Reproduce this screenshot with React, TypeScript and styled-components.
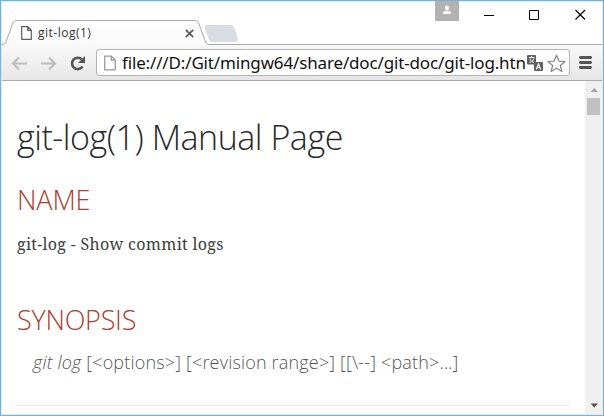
import React from 'react';
import styled, { createGlobalStyle } from 'styled-components';

const GlobalStyle = createGlobalStyle`
  * { box-sizing: border-box; }
  body { margin: 0; background: #fff; overflow: hidden; }
  svg { display: block; flex: none; }
`;

const Window = styled.div`
  width: 604px;
  height: 416px;
  display: flex;
  flex-direction: column;
  background: #fff;
  border: 1px solid #7ab0d4;
  box-shadow: inset 0 0 0 1px #d5eefb;
  overflow: hidden;
`;

const TitleBar = styled.header`
  height: 44px;
  flex: none;
  display: flex;
  align-items: flex-start;
  justify-content: space-between;
  position: relative;
`;

const TabOutline = styled.svg`
  position: absolute;
  left: 0;
  top: 0;
`;

const TabContent = styled.div`
  position: relative;
  display: flex;
  align-items: center;
  width: 193px;
  height: 24px;
  margin-top: 20px;
  padding-left: 20px;
`;

const TabTitle = styled.span`
  flex: 1;
  margin-left: 6px;
  font: 12px/16px "Open Sans", sans-serif;
  letter-spacing: 0.5px;
  color: #333;
`;

const Controls = styled.div`
  position: relative;
  display: flex;
  margin-right: 17px;
`;

const Profile = styled.div`
  width: 24px;
  height: 20px;
  margin-right: 25px;
  background: #b2b2b2;
`;

const ControlIcon = styled.div<{ $gap: number }>`
  width: 11px;
  height: 28px;
  padding-top: 8px;
  margin-right: ${(p) => p.$gap}px;
`;

const Toolbar = styled.nav`
  height: 36px;
  flex: none;
  display: flex;
  align-items: center;
  margin: 0 1px;
  padding: 0 8px 0 9px;
  background: linear-gradient(#f9f9f9, #e6e6e6);
  border-bottom: 1px solid #aaa;
`;

const NavIcons = styled.div`
  display: flex;
  width: 85px;
`;

const AddressBar = styled.div`
  display: flex;
  align-items: center;
  width: 474px;
  height: 27px;
  padding-left: 7px;
  margin-right: 9px;
  background: #fff;
  border: 1px solid #b4b4b4;
  border-radius: 3px;
`;

const Url = styled.span`
  width: 404px;
  margin-left: 6px;
  overflow: hidden;
  white-space: nowrap;
  font: 17px/24px "Noto Sans", sans-serif;
  letter-spacing: -0.15px;
  color: #111;
`;

const Viewport = styled.div`
  flex: 1;
  min-height: 0;
  display: flex;
  margin: 0 1px 1px;
`;

const Page = styled.main`
  flex: 1;
  padding: 0 15px;
  font-family: "Open Sans", sans-serif;
  font-weight: 300;
`;

const Title = styled.h1`
  margin: 33px 0 0;
  font-size: 34px;
  line-height: 46px;
  font-weight: 300;
  letter-spacing: -0.46px;
  color: #292929;
  white-space: nowrap;
`;

const Heading = styled.h2<{ $top: number; $tracking: number }>`
  margin: ${(p) => p.$top}px 0 0;
  font-size: 27px;
  line-height: 36px;
  font-weight: 300;
  letter-spacing: ${(p) => p.$tracking}px;
  color: #a9402f;
`;

const Summary = styled.p`
  margin: 13px 0 0;
  font: 400 16px/26px "Noto Serif", "Droid Serif", "DejaVu Serif Condensed", "DejaVu Serif", serif;
  font-stretch: condensed;
  letter-spacing: 0.31px;
  color: #39403d;
  white-space: nowrap;
`;

const Synopsis = styled.div`
  height: 58px;
  margin-top: 10px;
  padding: 1px 0 0 16px;
  border-bottom: 1px solid #e9e9e9;
  font-size: 18px;
  line-height: 26px;
  letter-spacing: 0.18px;
  color: #555;
  white-space: nowrap;
`;

const ScrollBar = styled.aside`
  display: flex;
  flex-direction: column;
  align-items: center;
  width: 17px;
  background: #f0f0f0;
`;

const Thumb = styled.div`
  width: 13px;
  height: 17px;
  margin: 0 0 auto;
  background: #c1c1c1;
`;

const PageIcon = ({ w, h, color }: { w: number; h: number; color: string }) => (
  <svg width={w} height={h} viewBox="0 0 11 14" fill="#fff" stroke={color} strokeWidth="1.2">
    <path d="M.7.7h6l3.6 3.6v9H.7zM6.7.7v3.6h3.6" />
  </svg>
);

export default function App() {
  return (
    <>
      <GlobalStyle />
      <Window>
        <TitleBar>
          <TabOutline width="602" height="44" viewBox="1 1 602 44">
            <defs>
              <linearGradient id="tab" x1="0" y1="0" x2="0" y2="1">
                <stop offset="0" stopColor="#fff" />
                <stop offset="1" stopColor="#f9f9f9" />
              </linearGradient>
            </defs>
            <path
              d="M2 44.5C5 44.5 5.5 43 6.5 40.5L12.5 24C13.5 21 14.5 20.5 17 20.5H194C197 20.5 198 21.5 199 24L205 40.5C206 43.5 207 44.5 210 44.5H602V46H2Z"
              fill="url(#tab)"
              stroke="#a8a8a8"
            />
            <path
              d="M208 25.5H230C232 25.5 233 26 234 28L237 38C238 40.5 236.5 41.5 234.5 41.5H213C211 41.5 210 41 209 39L205.5 29C204.5 26.5 206 25.5 208 25.5Z"
              fill="#d9dde4"
              stroke="#cdd1d8"
              strokeWidth=".7"
            />
          </TabOutline>
          <TabContent>
            <PageIcon w={11} h={14} color="#5c5c5c" />
            <TabTitle>git-log(1)</TabTitle>
            <svg width="9" height="9" viewBox="0 0 9 9" stroke="#5a5a5a" strokeWidth="1.7">
              <path d="M.8.8l7.4 7.4M8.2.8L.8 8.2" />
            </svg>
          </TabContent>
          <Controls>
            <Profile>
              <svg width="24" height="20" viewBox="0 0 24 20" fill="#fff">
                <circle cx="12" cy="6.8" r="2.2" />
                <path d="M8 13v-1.2c0-1.4 2.2-2 4-2s4 .6 4 2V13z" />
              </svg>
            </Profile>
            <ControlIcon $gap={34}>
              <svg width="11" height="11" viewBox="0 0 11 11" stroke="#000"><path d="M0 6.5h10" /></svg>
            </ControlIcon>
            <ControlIcon $gap={35}>
              <svg width="11" height="11" viewBox="0 0 11 11" fill="none" stroke="#000"><path d="M.5 1.5h9v9h-9z" /></svg>
            </ControlIcon>
            <ControlIcon $gap={0}>
              <svg width="11" height="11" viewBox="0 0 11 11" stroke="#000" strokeWidth="1.2"><path d="M.5 1l9.5 9.5M10 1L.5 10.5" /></svg>
            </ControlIcon>
          </Controls>
        </TitleBar>
        <Toolbar>
          <NavIcons>
            <svg width="85" height="18" viewBox="11 53 85 18" fill="none">
              <g stroke="#bdbdbd" strokeWidth="2.2">
                <path d="M27 62.5H13M19 56.5l-6 6 6 6" />
                <path d="M41 62.5h14M49 56.5l6 6-6 6" />
              </g>
              <path d="M82.5 65.5a5.7 5.7 0 1 1-.8-7.2" stroke="#555" strokeWidth="2.6" />
              <path d="M85 55v7h-7z" fill="#555" />
            </svg>
          </NavIcons>
          <AddressBar>
            <PageIcon w={12} h={16} color="#999" />
            <Url>file:///D:/Git/mingw64/share/doc/git-doc/git-log.htn</Url>
            <svg width="40" height="20" viewBox="526 52 40 20">
              <rect x="527" y="54" width="9" height="9.5" rx="1" fill="#606060" />
              <path d="M529 56.5h5.5M531.7 55v1.5M529.8 57.5c.6 2.2 2 3.3 4.4 4M533.8 57.5c-.6 2.2-2 3.3-4.4 4" fill="none" stroke="#fff" strokeWidth=".9" />
              <rect x="534" y="61" width="9" height="9" rx="1" fill="#606060" />
              <path d="M536.2 68.5l2.3-5.5 2.3 5.5M537 66.8h3" fill="none" stroke="#fff" strokeWidth="1.1" />
              <path d="M556.5 54.3l2.4 5.8 6.2.4-4.8 4 1.6 6.1-5.4-3.4-5.4 3.4 1.6-6.1-4.8-4 6.2-.4z" fill="#fff" stroke="#858585" strokeWidth="1.2" strokeLinejoin="round" />
            </svg>
          </AddressBar>
          <svg width="13" height="13" viewBox="0 0 13 13" stroke="#555" strokeWidth="2.8" strokeLinecap="round">
            <path d="M1.4 1.5h10.2M1.4 6.5h10.2M1.4 11.5h10.2" />
          </svg>
        </Toolbar>
        <Viewport>
          <Page>
            <Title>git-log(1) Manual Page</Title>
            <Heading $top={22} $tracking={-0.15}>NAME</Heading>
            <Summary>git-log - Show commit logs</Summary>
            <Heading $top={45} $tracking={-0.25}>SYNOPSIS</Heading>
            <Synopsis>
              <em>git log</em> [&lt;options&gt;] [&lt;revision range&gt;] [[\--] &lt;path&gt;…]
            </Synopsis>
          </Page>
          <ScrollBar>
            <svg width="16" height="17" viewBox="0 0 16 17"><path d="M4.5 11l3.8-4 3.7 4z" fill="#a3a3a3" /></svg>
            <Thumb />
            <svg width="16" height="17" viewBox="0 0 16 17"><path d="M4.5 6.5h7.5l-3.7 4z" fill="#505050" /></svg>
          </ScrollBar>
        </Viewport>
      </Window>
    </>
  );
}
